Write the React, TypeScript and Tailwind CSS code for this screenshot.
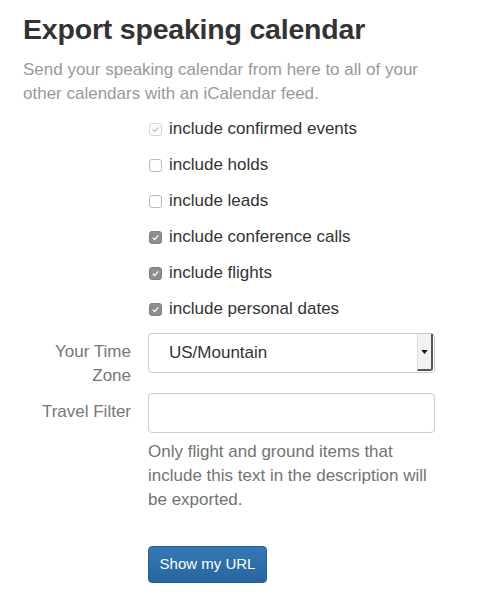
import React, { useState } from 'react';

const OPTIONS = [
  { key: 'confirmed', label: 'include confirmed events', disabled: true },
  { key: 'holds', label: 'include holds' },
  { key: 'leads', label: 'include leads' },
  { key: 'calls', label: 'include conference calls' },
  { key: 'flights', label: 'include flights' },
  { key: 'personal', label: 'include personal dates' },
];

function Box({ checked, disabled }: { checked: boolean; disabled?: boolean }) {
  if (disabled) {
    return (
      <span className="w-[13px] h-[13px] rounded-[3px] border border-[#d6d6d6] bg-[#fafafa] flex items-center justify-center shrink-0">
        <svg viewBox="0 0 10 10" className="w-[9px] h-[9px]">
          <path d="M2 5.2 L4.1 7.3 L8 2.6" fill="none" stroke="#b5b5b5" strokeWidth="1.2" />
        </svg>
      </span>
    );
  }
  if (!checked) {
    return <span className="w-[13px] h-[13px] rounded-[3px] border border-[#b9b9b9] bg-white shrink-0" />;
  }
  return (
    <span className="w-[13px] h-[13px] rounded-[3px] border border-[#7f7f7f] bg-[#8e8e8e] flex items-center justify-center shrink-0">
      <svg viewBox="0 0 10 10" className="w-[9px] h-[9px]">
        <path d="M2 5.2 L4.1 7.3 L8 2.6" fill="none" stroke="#ffffff" strokeWidth="1.5" />
      </svg>
    </span>
  );
}

export default function App() {
  const [checks, setChecks] = useState<Record<string, boolean>>({
    confirmed: true,
    holds: false,
    leads: false,
    calls: true,
    flights: true,
    personal: true,
  });
  const [filter, setFilter] = useState('');

  return (
    <div className="min-h-[600px] bg-white pl-[23px] pt-[13px] text-[#333] font-['Liberation_Sans',Arial,sans-serif]">
      <h1 className="text-[28.5px] leading-[32px] font-bold tracking-[-0.2px] text-[#333]">Export speaking calendar</h1>
      <p className="mt-[13px] text-[17px] leading-[24px] text-[#999] w-[420px]">
        Send your speaking calendar from here to all of your other calendars with an iCalendar feed.
      </p>

      <div className="mt-[5px] pl-[126px] flex flex-col">
        {OPTIONS.map(o => (
          <label
            key={o.key}
            className="h-[36px] flex items-center gap-[7px] text-[17px] text-[#333] cursor-pointer"
            onClick={() => !o.disabled && setChecks({ ...checks, [o.key]: !checks[o.key] })}
          >
            <Box checked={checks[o.key]} disabled={o.disabled} />
            <span>{o.label}</span>
          </label>
        ))}
      </div>

      <div className="mt-[6px] flex items-start">
        <div className="w-[108px] text-right text-[17px] leading-[24px] text-[#777] pt-[7px]">Your Time Zone</div>
        <div className="ml-[17px] relative w-[287px] h-[40px] rounded-[4px] border border-[#ccc] bg-white flex items-center pl-[20px] text-[17px] text-[#333]">
          US/Mountain
          <span className="absolute right-[1px] top-0 w-[16px] h-[37px] bg-[#f2f2f2] border-l border-[#dcdcdc] border-r-2 border-b-2 border-r-[#555] border-b-[#555] rounded-br-[3px] flex items-center justify-center">
            <svg viewBox="0 0 8 5" className="w-[7px] h-[4px]">
              <path d="M0 0 L8 0 L4 5 Z" fill="#111" />
            </svg>
          </span>
        </div>
      </div>

      <div className="mt-[5px] flex items-start">
        <div className="w-[108px] text-right text-[17px] leading-[24px] text-[#777] pt-[7px]">Travel Filter</div>
        <div className="ml-[17px] w-[287px]">
          <input
            value={filter}
            onChange={e => setFilter(e.target.value)}
            className="w-full h-[40px] rounded-[4px] border border-[#ccc] bg-white px-3 text-[17px] outline-none"
          />
          <p className="mt-[7px] text-[17px] leading-[24px] text-[#737373] w-[287px]">
            Only flight and ground items that include this text in the description will be exported.
          </p>
          <button className="mt-[34px] h-[37px] w-[119px] rounded-[4px] border border-[#245e95] bg-gradient-to-b from-[#3279b6] to-[#28659f] text-white text-[15px]">
            Show my URL
          </button>
        </div>
      </div>
    </div>
  );
}
